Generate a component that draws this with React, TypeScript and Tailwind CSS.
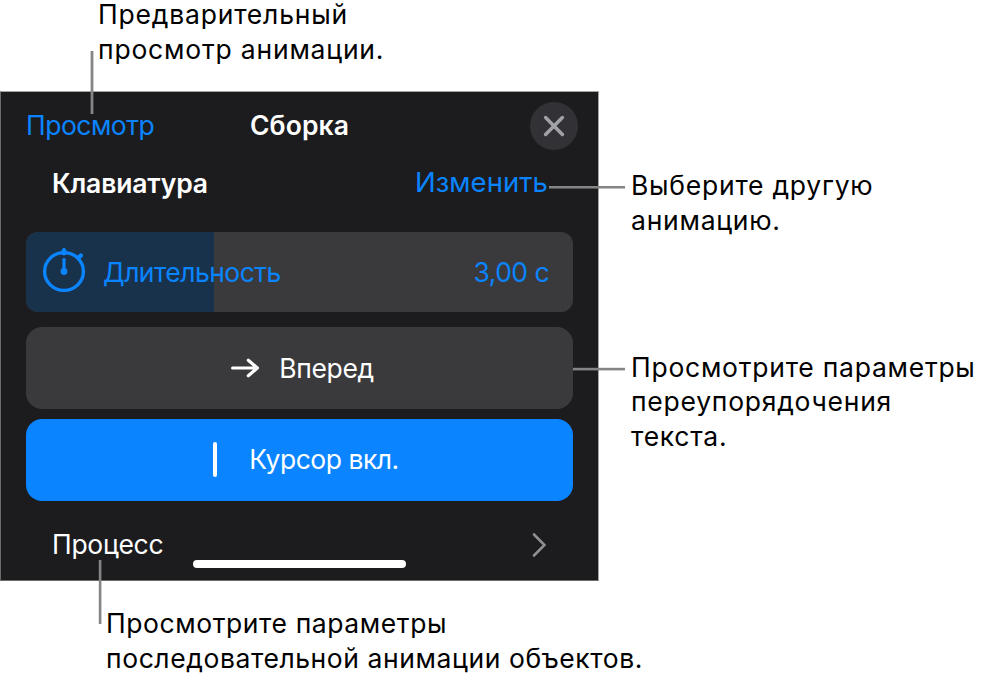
import clsx from "clsx";

interface CaptionProps {
  lines: string[];
  className?: string;
}

function Caption({ lines, className }: CaptionProps) {
  return (
    <p className={clsx("flex flex-col gap-[6.7px] text-[26.5px] leading-7 whitespace-nowrap text-black", className)}>
      {lines.map((line) => (
        <span key={line}>{line}</span>
      ))}
    </p>
  );
}

function StopwatchIcon() {
  return (
    <svg width="44" height="46" viewBox="0 0 44 46" fill="none" stroke="#0a84ff" strokeLinecap="round" className="-mt-[4px]">
      <ellipse cx="22" cy="24.5" rx="19.4" ry="18.9" strokeWidth="3.4" />
      <path d="M22 3.2v3" strokeWidth="4.4" />
      <path d="M36.5 10.6l2.2-2" strokeWidth="4.4" />
      <path d="M22 12.5v12" strokeWidth="3.2" />
      <circle cx="22" cy="24.5" r="3.4" fill="#0a84ff" stroke="none" />
    </svg>
  );
}

function Header() {
  return (
    <div className="grid h-[67px] grid-cols-3 items-center px-[25px]">
      <button className="pb-0.5 text-left tracking-[-0.5px] text-[#0a84ff]">Просмотр</button>
      <h1 className="pb-0.5 text-center font-semibold tracking-[0.1px] text-white">Сборка</h1>
      <button className="-mr-[5px] flex size-12 items-center justify-center justify-self-end rounded-full bg-[#323236]">
        <svg width="22" height="22" viewBox="0 0 22 22" stroke="#a1a1a8" strokeWidth="3.5" strokeLinecap="round">
          <path d="M2.6 2.6l16.8 16.8M19.4 2.6L2.6 19.4" />
        </svg>
      </button>
    </div>
  );
}

function DurationSlider() {
  return (
    <div className="mt-[27px] grid h-[80px] overflow-hidden rounded-xl bg-[#3a3a3c]">
      <div className="col-start-1 row-start-1 w-[188px] bg-[#19324b]" />
      <div className="col-start-1 row-start-1 flex items-center pr-6 pl-4 tracking-[-0.55px] text-[#0a84ff]">
        <StopwatchIcon />
        <span className="ml-[17px]">Длительность</span>
        <span className="ml-auto">3,00 с</span>
      </div>
    </div>
  );
}

function BuildPanel() {
  return (
    <div className="h-[490px] w-[599px] shrink-0 border border-[#6b6b6c] border-t-[#a5a5a6] border-r-[#a5a5a6] bg-[#1c1c1e] text-[26.5px] leading-8 whitespace-nowrap">
      <Header />
      <div className="px-[25px]">
        <div className="flex h-[46px] items-center justify-between px-[25px]">
          <h2 className="pt-px pl-px font-semibold tracking-[-0.15px] text-white">Клавиатура</h2>
          <button className="text-[27.5px] tracking-[0.05px] text-[#0a84ff]">Изменить</button>
        </div>
        <DurationSlider />
        <button className="mt-[15px] flex h-[82px] w-full items-center justify-center gap-5 rounded-2xl bg-[#3a3a3c] pl-1.5 tracking-[-0.35px] text-white">
          <svg width="28" height="20" viewBox="0 0 28 20" fill="none" stroke="white" strokeWidth="3.2" strokeLinecap="round" strokeLinejoin="round">
            <path d="M1.6 10h24.8M17.3 2.2l9.1 7.8-9.1 7.8" />
          </svg>
          Вперед
        </button>
        <button className="mt-[9.5px] flex h-[82px] w-full items-center justify-center gap-[32px] rounded-2xl bg-[#0a84ff] pb-px pl-[13px] tracking-[-0.5px] text-white">
          <span className="h-[35px] w-[4px] rounded-full bg-white" />
          Курсор вкл.
        </button>
        <div className="mt-[28.5px] flex h-8 items-center justify-between px-[25px] text-white">
          <span className="pb-0.5 pl-px tracking-[-0.3px]">Процесс</span>
          <svg width="14" height="24" viewBox="0 0 14 24" fill="none" stroke="#8e8e93" strokeWidth="2.6" strokeLinecap="round" className="mr-[2px]">
            <path d="M2 1.5L12.5 12 2 22.5" />
          </svg>
        </div>
      </div>
      <div className="mx-auto -mt-px h-2 w-[213px] rounded-full bg-white" />
    </div>
  );
}

export default function App() {
  return (
    <div className="relative h-[681px] w-[987px] bg-white font-['Inter','Noto_Sans',sans-serif]">
      <div className="h-[91px] pl-[98px]">
        <Caption lines={["Предварительный", "просмотр анимации."]} className="tracking-[0.8px]" />
      </div>
      <div className="flex">
        <BuildPanel />
        <div className="pt-[80px] pl-[32px] tracking-[0.75px]">
          <Caption lines={["Выберите другую", "анимацию."]} />
          <Caption lines={["Просмотрите параметры", "переупорядочения", "текста."]} className="mt-[119px]" />
        </div>
      </div>
      <Caption lines={["Просмотрите параметры", "последовательной анимации объектов."]} className="pt-[28px] pl-[106px] tracking-[0.58px]" />

      {/* callout lines over the panel */}
      <div className="absolute top-[51px] left-[91px] h-[63px] w-[2px] bg-[#858585] shadow-[1px_0_#85858566,-1px_0_#85858566]" />
      <div className="absolute top-[186px] left-[549px] h-[2px] w-[76px] bg-[#858585] shadow-[0_1px_#85858588]" />
      <div className="absolute top-[368px] left-[573px] h-[2px] w-[52px] bg-[#858585] shadow-[0_1px_#85858566,0_-1px_#85858533]" />
      <div className="absolute top-[560px] left-[99px] h-[64px] w-[2px] bg-[#858585] shadow-[1px_0_#85858566,-1px_0_#85858533]" />
    </div>
  );
}
